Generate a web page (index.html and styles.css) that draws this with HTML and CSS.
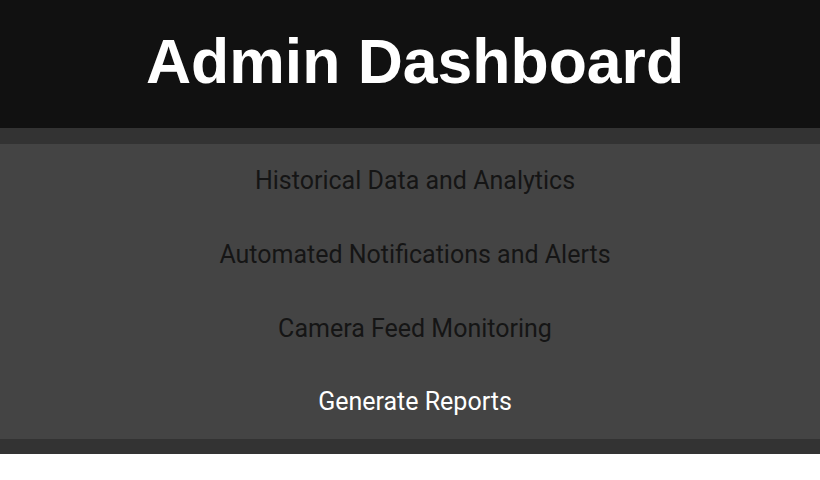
FILE: index.html
```html
<!DOCTYPE html>
<html lang="en">
<head>
<meta charset="utf-8">
<title>Admin Dashboard</title>
<link rel="stylesheet" href="styles.css">
</head>
<body>
<header class="header">
  <h1 class="title">Admin Dashboard</h1>
</header>
<nav class="nav">
  <ul class="menu">
    <li class="menu-item">Historical Data and Analytics</li>
    <li class="menu-item">Automated Notifications and Alerts</li>
    <li class="menu-item">Camera Feed Monitoring</li>
    <li class="menu-item active">Generate Reports</li>
  </ul>
</nav>
</body>
</html>
```
FILE: styles.css
```css
html, body {
  margin: 0;
  padding: 0;
  background: #fff;
}
.header {
  background: #111111;
  height: 128px;
  box-sizing: border-box;
  display: flex;
  align-items: center;
  justify-content: center;
  padding: 0 0 5px 10px;
}
.title {
  margin: 0;
  color: #fff;
  font-family: "Liberation Sans", Arial, sans-serif;
  font-weight: bold;
  font-size: 62.5px;
  line-height: 1;
}
.nav {
  background: #333333;
  padding: 16px 0 15px;
}
.menu {
  list-style: none;
  margin: 0;
  padding: 0;
  background: #444444;
}
.menu-item {
  font-family: Roboto, "Noto Sans", sans-serif;
  font-size: 25px;
  line-height: 25.75px;
  padding: 24px 0 24px 10px;
  text-align: center;
  color: #151515;
}
.menu-item.active {
  color: #fff;
}
```
